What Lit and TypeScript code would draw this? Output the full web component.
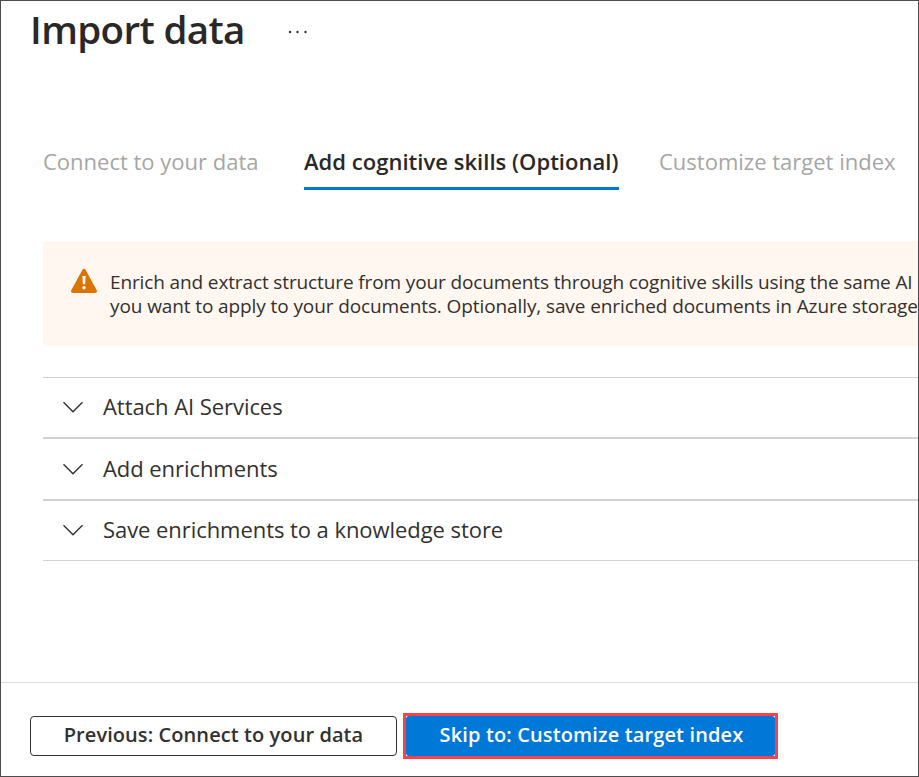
import { LitElement, html, css } from "lit";
import { customElement } from "lit/decorators.js";

@customElement("app-root")
export class AppRoot extends LitElement {
  static styles = css`
    :host {
      display: flex;
      flex-direction: column;
      box-sizing: border-box;
      width: 919px;
      height: 777px;
      border: 1px solid #504c4e;
      background: #fff;
      color: #292827;
      font-family: "Open Sans", "Noto Sans", sans-serif;
      overflow: hidden;
      white-space: nowrap;
    }
    * { box-sizing: border-box; }
    header { display: flex; height: 130px; padding-left: 29px; }
    h1 { margin: 0; font-size: 38.5px; font-weight: 600; line-height: 56px; height: 58px; letter-spacing: -0.62px; width: 257px; }
    .more { width: 20px; height: 58px; }
    nav { display: flex; gap: 40px; padding-left: 42px; height: 110px; }
    .tab { height: 59px; padding-top: 12px; line-height: 36px; font-size: 22px; color: #a6a6a6; width: 221px; }
    .active { width: 315px; color: #292827; font-weight: 600; letter-spacing: 0.03px; border-bottom: 3px solid #0078d4; }
    .alert { display: flex; margin-left: 42px; height: 105px; background: #fff7f0; border-radius: 3px 0 0 3px; padding: 27px 0 0 27px; }
    .alert svg { width: 28px; height: 26px; flex: none; }
    .message { margin: 2px 0 0 12px; font-size: 19px; line-height: 24px; color: #323130; }
    .line { display: block; }
    .l1 { letter-spacing: -0.125px; }
    .l2 { letter-spacing: -0.1px; }
    .sections { margin: 31px 0 0 42px; border-top: 1px solid #d2d2d2; }
    .section { display: flex; align-items: center; height: 61px; border-bottom: 2px solid #d2d2d2; padding: 0 0 1px 19px; font-size: 22px; letter-spacing: -0.06px; color: #323130; }
    .section:nth-child(2) { height: 62px; }
    .section:last-child { border-bottom-width: 1px; height: 60px; }
    .section svg { width: 22px; height: 14px; margin-right: 19px; flex: none; }
    .section span { padding-bottom: 2px; }
    footer { display: flex; margin-top: auto; height: 94px; border-top: 1px solid #dcdcdc; padding: 30px 0 0 29px; }
    button { font: 600 20px/36px "Open Sans", "Noto Sans", sans-serif; letter-spacing: 0.08px; padding: 0 0 2px; white-space: nowrap; }
    .previous { width: 367px; height: 40px; margin-top: 3px; color: #323130; background: #fff; border: 1px solid #323130; border-radius: 4px; }
    .highlight { width: 375px; height: 46px; margin-left: 6px; border: 3px solid #fa4248; display: flex; }
    .next { width: 369px; height: 40px; padding-left: 2px; letter-spacing: 0.13px; border: 0; border-radius: 3px; background: #0078d7; color: #fff; }
  `;

  private sections = ["Attach AI Services", "Add enrichments", "Save enrichments to a knowledge store"];

  render() {
    return html`
      <header>
        <h1>Import data</h1>
        <svg class="more" viewBox="0 0 20 58" fill="#323130">
          <circle cx="3" cy="31" r="1.2" /><circle cx="10.5" cy="31" r="1.2" /><circle cx="18.5" cy="31" r="1.2" />
        </svg>
      </header>
      <nav>
        <div class="tab">Connect to your data</div>
        <div class="tab active">Add cognitive skills (Optional)</div>
        <div class="tab">Customize target index</div>
      </nav>
      <div class="alert">
        <svg viewBox="0 0 28 26">
          <path d="M12.3 1.9Q14 -.4 15.7 1.9L26.6 22Q27.8 24.8 25 25H3Q.2 24.8 1.4 22Z" fill="#db7500" />
          <path d="M12.4 8h3.2l-.4 8.3h-2.4Z" fill="#fff" /><circle cx="14" cy="19.7" r="1.7" fill="#fff" />
        </svg>
        <div class="message">
          <span class="line l1">Enrich and extract structure from your documents through cognitive skills using the same AI</span>
          <span class="line l2">you want to apply to your documents. Optionally, save enriched documents in Azure storage</span>
        </div>
      </div>
      <div class="sections">
        ${this.sections.map((s) => html`
          <div class="section">
            <svg viewBox="0 0 22 14"><path d="M1.5 2.2 11 11.8 20.5 2.2" fill="none" stroke="#323130" stroke-width="1.4" /></svg>
            <span>${s}</span>
          </div>`)}
      </div>
      <footer>
        <button class="previous">Previous: Connect to your data</button>
        <div class="highlight"><button class="next">Skip to: Customize target index</button></div>
      </footer>
    `;
  }
}
